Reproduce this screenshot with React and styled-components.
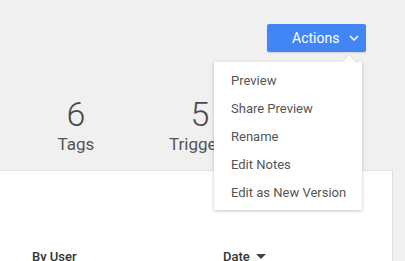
import React from "react";
import styled, { createGlobalStyle } from "styled-components";

const Global = createGlobalStyle`
  html, body { margin: 0; padding: 0; background: #f0f0f0; }
  body { font-family: Roboto, "Liberation Sans", Arial, sans-serif; overflow: hidden; }
`;

const Page = styled.div`
  width: 405px;
  height: 261px;
  overflow: hidden;
  background: #f0f0f0;
  display: flex;
  flex-direction: column;
`;

const Header = styled.div`
  display: flex;
  justify-content: flex-end;
  padding: 24px 39px 0 0;
  height: 28px;
`;

const ActionsWrap = styled.div`
  position: relative;
`;

const ActionsButton = styled.button`
  display: flex;
  align-items: center;
  gap: 10px;
  width: 99px;
  height: 28px;
  padding: 0 10px 0 25px;
  border: none;
  border-radius: 2px;
  background: #4285f4;
  color: #fff;
  font-family: inherit;
  font-size: 14px;
  white-space: nowrap;
  box-shadow: 0 1px 1px rgba(0, 0, 0, 0.12);
  box-sizing: border-box;
  svg { flex-shrink: 0; }
`;

const Menu = styled.ul`
  position: absolute;
  top: 38px;
  right: 4px;
  width: 148px;
  margin: 0;
  padding: 5px 0 3px;
  list-style: none;
  background: #fff;
  box-shadow: 0 1px 3px rgba(0, 0, 0, 0.24);
  box-sizing: border-box;
  z-index: 5;
  &::before {
    content: "";
    position: absolute;
    top: -5px;
    right: 9px;
    width: 8px;
    height: 8px;
    background: #fff;
    transform: rotate(45deg);
    box-shadow: -1px -1px 1px rgba(0, 0, 0, 0.06);
  }
`;

const MenuItem = styled.li`
  position: relative;
  height: 28px;
  line-height: 28px;
  padding-left: 17px;
  font-size: 13px;
  color: #555;
  white-space: nowrap;
`;

const Stats = styled.div`
  display: flex;
  padding: 42px 0 16px 14px;
`;

const Stat = styled.div`
  width: 124px;
  display: flex;
  flex-direction: column;
  align-items: center;
  color: #4a4a4a;
`;

const StatNumber = styled.div`
  font-size: 34px;
  font-weight: 300;
  line-height: 40px;
`;

const StatLabel = styled.div`
  font-size: 17px;
  line-height: 20px;
  color: #555;
`;

const Card = styled.div`
  flex: 1;
  margin: 0 12px 0 -1px;
  background: #fff;
  border: 1px solid #e0e0e0;
  border-bottom: none;
  display: flex;
  align-items: flex-end;
`;

const TableHead = styled.div`
  display: flex;
  align-items: center;
  padding: 0 0 0 32px;
  height: 20px;
  margin-bottom: -5px;
  font-size: 13px;
  font-weight: 500;
  color: #333;
`;

const HeadCell = styled.div`
  width: ${(p) => p.$w}px;
  display: flex;
  align-items: center;
  gap: 6px;
`;

const Chevron = () => (
  <svg width="10" height="6" viewBox="0 0 10 6" fill="none">
    <path d="M1 1l4 4 4-4" stroke="#fff" strokeWidth="1.5" />
  </svg>
);

const SortDown = () => (
  <svg width="10" height="5" viewBox="0 0 10 5">
    <path d="M0 0h10L5 5z" fill="#444" />
  </svg>
);

export default function App() {
  const items = ["Preview", "Share Preview", "Rename", "Edit Notes", "Edit as New Version"];
  return (
    <Page>
      <Global />
      <Header>
        <ActionsWrap>
          <ActionsButton>
            Actions <Chevron />
          </ActionsButton>
          <Menu>
            {items.map((t) => (
              <MenuItem key={t}>{t}</MenuItem>
            ))}
          </Menu>
        </ActionsWrap>
      </Header>
      <Stats>
        <Stat>
          <StatNumber>6</StatNumber>
          <StatLabel>Tags</StatLabel>
        </Stat>
        <Stat>
          <StatNumber>5</StatNumber>
          <StatLabel>Triggers</StatLabel>
        </Stat>
        <Stat>
          <StatNumber>7</StatNumber>
          <StatLabel>Variables</StatLabel>
        </Stat>
      </Stats>
      <Card>
        <TableHead>
          <HeadCell $w={191}>By User</HeadCell>
          <HeadCell $w={80}>
            Date <SortDown />
          </HeadCell>
        </TableHead>
      </Card>
    </Page>
  );
}
